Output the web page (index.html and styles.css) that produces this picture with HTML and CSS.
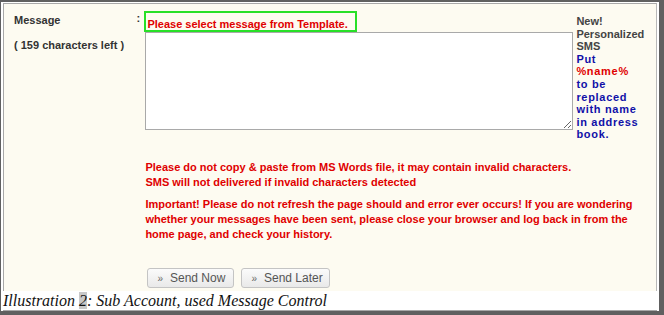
FILE: index.html
```html
<!DOCTYPE html>
<html>
<head>
<meta charset="utf-8">
<link rel="stylesheet" href="styles.css">
</head>
<body>
<div class="page">
  <div class="panel">
    <div class="labels">
      <div class="lbl">Message</div>
      <div class="lbl left">( 159 characters left )</div>
    </div>
    <div class="colon">:</div>
    <div class="main">
      <div class="notice">Please select message from Template.</div>
      <textarea class="msg"></textarea>
      <p class="warn first">Please do not copy &amp; paste from MS Words file, it may contain invalid characters.<br>SMS will not delivered if invalid characters detected</p>
      <p class="warn">Important! Please do not refresh the page should and error ever occurs! If you are wondering whether your messages have been sent, please close your browser and log back in from the home page, and check your history.</p>
      <div class="buttons">
        <button class="btn now"><span class="arr">&raquo;</span>Send Now</button>
        <button class="btn later"><span class="arr">&raquo;</span>Send Later</button>
      </div>
    </div>
    <div class="side">
      <div class="gray">New!<br>Personalized<br>SMS</div>
      <div class="blue">Put<br><span class="red">%name%</span><br>to be<br>replaced<br>with name<br>in address<br>book.</div>
    </div>
  </div>
  <div class="caption">Illustration <span class="num">2</span>: Sub Account, used Message Control</div>
</div>
</body>
</html>
```
FILE: styles.css
```css
html, body {
  margin: 0;
  padding: 0;
}
body {
  background: #606060;
  width: 664px;
  height: 315px;
  overflow: hidden;
}
.page {
  margin: 2px 5px 0 1px;
  height: 309px;
  background: #fff;
  padding: 1px 2px 0 2px;
  box-sizing: border-box;
  display: flex;
  flex-direction: column;
}
.panel {
  background: #fdfbf1;
  border-top: 1px solid #a8a8a8;
  border-left: 1px solid #a8a8a8;
  border-right: 1px solid #b8b8b8;
  height: 288px;
  flex: none;
  box-sizing: border-box;
  display: flex;
  padding: 7px 0 0 10px;
  font-family: "Liberation Sans", Arial, sans-serif;
  font-size: 11px;
  font-weight: bold;
}
.labels {
  width: 123px;
  padding-top: 3px;
  color: #333;
}
.lbl {
  line-height: 13px;
}
.lbl.left {
  margin-top: 12px;
}
.colon {
  width: 8px;
  color: #333;
  line-height: 13px;
  padding-top: 1px;
}
.main {
  width: 429px;
  display: flex;
  flex-direction: column;
  align-items: flex-start;
}
.notice {
  border: 2px solid #28e028;
  color: #e00000;
  line-height: 11px;
  padding: 6px 7px 0 1px;
  height: 11px;
  box-sizing: content-box;
  font-size: 11px;
}
.msg {
  width: 428px;
  height: 98px;
  margin: 0 0 0 1px;
  border: 1px solid #a9a9a9;
  box-sizing: border-box;
  background: #fff;
  display: block;
}
.warn {
  color: #e00000;
  margin: 30px 0 0 1px;
  line-height: 15px;
  width: 500px;
}
.warn + .warn {
  margin-top: 7px;
}
.buttons {
  margin-top: 26px;
  margin-left: 3px;
  display: flex;
  gap: 7px;
}
.btn {
  height: 20px;
  padding: 0 0 0 9px;
  border: 1px solid #c4c4c4;
  border-radius: 3px;
  background: linear-gradient(#fbfbfb, #e9e9e9);
  color: #555;
  font-family: "Liberation Sans", Arial, sans-serif;
  font-size: 12px;
  font-weight: normal;
  display: flex;
  align-items: center;
  white-space: nowrap;
}
.btn.now { width: 87px; }
.btn.later { width: 89px; }
.arr {
  font-size: 10px;
  margin-right: 7px;
  color: #666;
}
.side {
  margin-left: 3px;
  padding-top: 4px;
  line-height: 12.6px;
  width: 80px;
}
.gray { color: #444; }
.blue { color: #1010a8; letter-spacing: 0.7px; }
.red { color: #e00000; }
.caption {
  flex: 1;
  border-bottom: 1px solid #a8a8a8;
  font-family: "Liberation Serif", "Times New Roman", serif;
  font-style: italic;
  font-size: 16px;
  line-height: 18px;
  padding-top: 1px;
  color: #111;
}
.num {
  background: #c8c8c8;
}
```
